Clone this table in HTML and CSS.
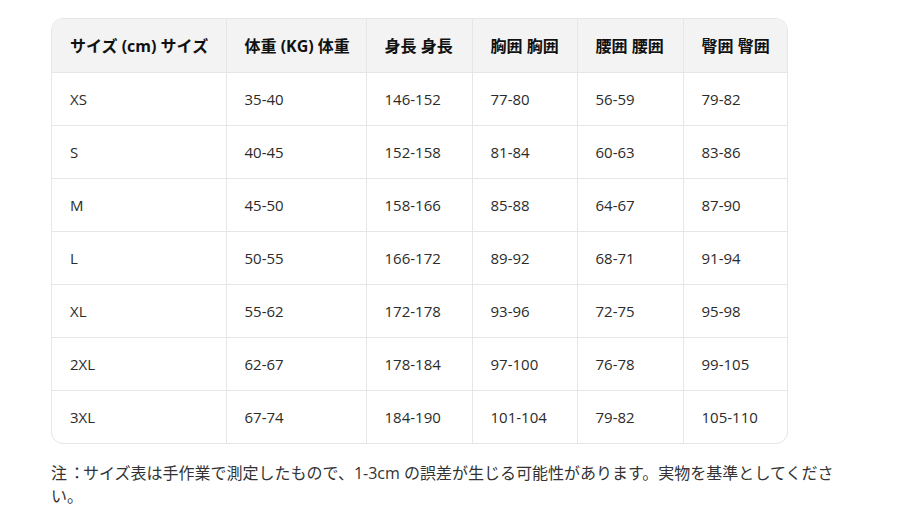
FILE: index.html
```html
<!DOCTYPE html>
<html lang="ja">
<head>
<meta charset="utf-8">
<link rel="stylesheet" href="styles.css">
</head>
<body>
<div class="page">
  <div class="table-wrap">
    <table class="size-table">
      <thead>
        <tr>
          <th class="c1">サイズ (cm) サイズ</th>
          <th class="c2">体重 (KG) 体重</th>
          <th class="c3">身長 身長</th>
          <th class="c4">胸囲 胸囲</th>
          <th class="c5">腰囲 腰囲</th>
          <th class="c6">臀囲 臀囲</th>
        </tr>
      </thead>
      <tbody>
        <tr><td>XS</td><td>35-40</td><td>146-152</td><td>77-80</td><td>56-59</td><td>79-82</td></tr>
        <tr><td>S</td><td>40-45</td><td>152-158</td><td>81-84</td><td>60-63</td><td>83-86</td></tr>
        <tr><td>M</td><td>45-50</td><td>158-166</td><td>85-88</td><td>64-67</td><td>87-90</td></tr>
        <tr><td>L</td><td>50-55</td><td>166-172</td><td>89-92</td><td>68-71</td><td>91-94</td></tr>
        <tr><td>XL</td><td>55-62</td><td>172-178</td><td>93-96</td><td>72-75</td><td>95-98</td></tr>
        <tr><td>2XL</td><td>62-67</td><td>178-184</td><td>97-100</td><td>76-78</td><td>99-105</td></tr>
        <tr><td>3XL</td><td>67-74</td><td>184-190</td><td>101-104</td><td>79-82</td><td>105-110</td></tr>
      </tbody>
    </table>
  </div>
  <p class="note">注<span class="colon">：</span>サイズ表は手作業で測定したもので、1-3cm の誤差が生じる可能性があります。実物を基準としてください。</p>
</div>
</body>
</html>
```
FILE: styles.css
```css
html, body {
  margin: 0;
  padding: 0;
  background: #ffffff;
}
body {
  font-family: "Open Sans", "Noto Sans CJK JP", sans-serif;
  color: #333333;
}
.page {
  padding: 18px 0 0 51px;
  width: 790px;
}
.table-wrap {
  width: 737px;
  border: 1px solid #e6e6e6;
  border-radius: 12px;
  overflow: hidden;
  box-sizing: border-box;
}
.size-table {
  width: 100%;
  border-collapse: collapse;
  table-layout: fixed;
  font-size: 15px;
}
.size-table th,
.size-table td {
  box-sizing: border-box;
  text-align: left;
  padding: 0 0 0 18px;
  border-right: 1px solid #e6e6e6;
  border-bottom: 1px solid #e6e6e6;
  white-space: nowrap;
}
.size-table th:last-child,
.size-table td:last-child {
  border-right: none;
}
.size-table tbody tr:last-child td {
  border-bottom: none;
}
.size-table th {
  background: #f3f3f3;
  color: #111111;
  font-weight: 700;
  font-size: 16px;
  height: 53px;
}
.size-table td {
  height: 53px;
  color: #2b2b2b;
}
.c1 { width: 174px; }
.c2 { width: 140px; }
.c3 { width: 106px; }
.c4 { width: 105px; }
.c5 { width: 106px; }
.c6 { width: auto; }
.note {
  margin: 18px 0 0 0;
  font-size: 16px;
  line-height: 23px;
  color: #333333;
}
.colon {
  display: inline-block;
  width: 1em;
  text-align: left;
  padding-left: 2px;
  box-sizing: border-box;
}
```
